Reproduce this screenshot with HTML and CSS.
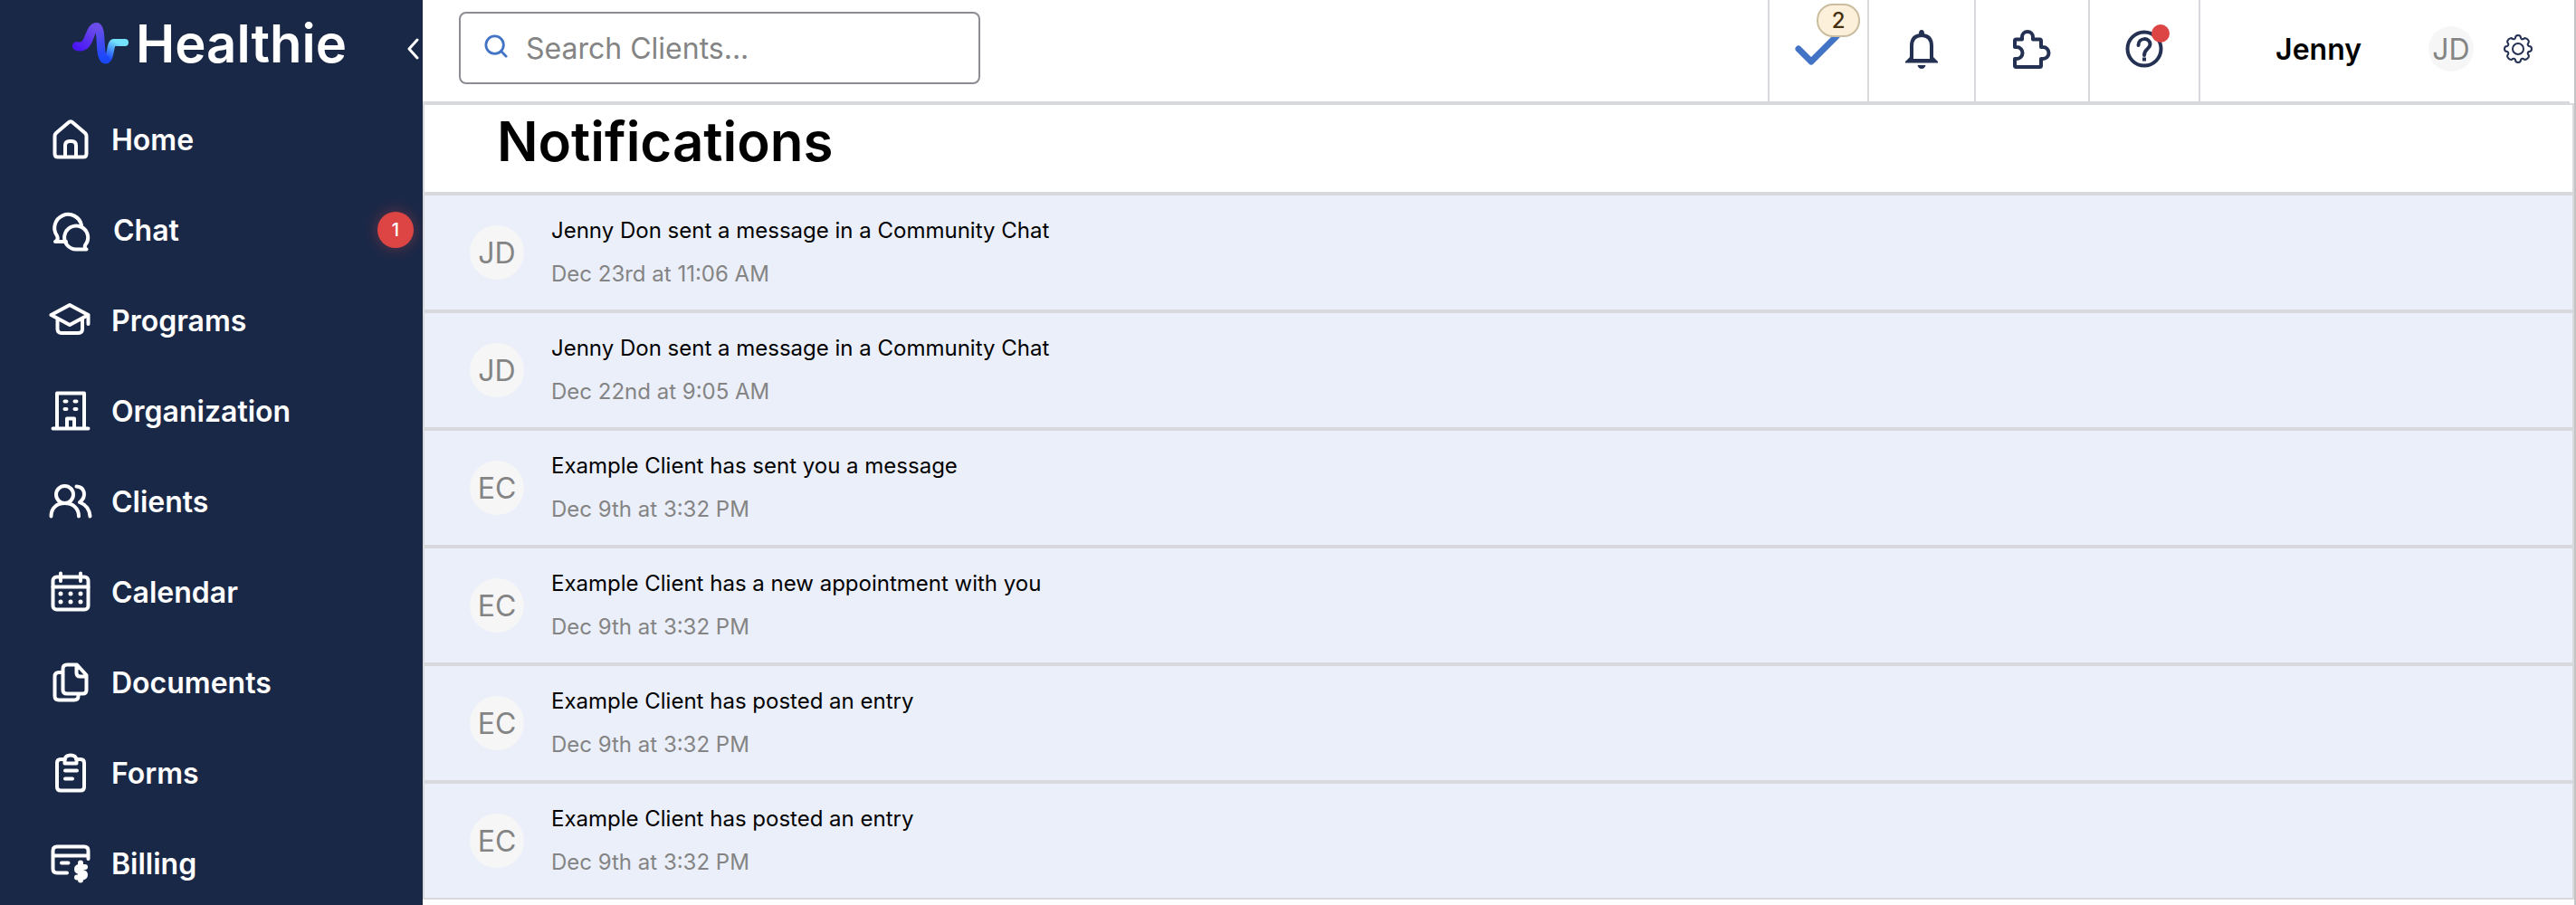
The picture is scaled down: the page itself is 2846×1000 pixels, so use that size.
FILE: index.html
```html
<!DOCTYPE html>
<html lang="en-us">
<head>
  <meta charset="utf-8">
  <title>Healthie - Notifications</title>
  <link rel="stylesheet" href="styles.css">
</head>
<body>

  <aside class="sidebar">
    <div class="brand">
      <a href="#" class="logo">
        <svg class="logo-mark" viewBox="0 0 62 48" fill="none" stroke-linecap="round" stroke-linejoin="round">
          <defs>
            <linearGradient id="wave-left" gradientUnits="userSpaceOnUse" x1="5" y1="30" x2="24" y2="6">
              <stop offset="0" stop-color="#4a14f5"/>
              <stop offset="1" stop-color="#6a4de9"/>
            </linearGradient>
            <linearGradient id="wave-mid" gradientUnits="userSpaceOnUse" x1="30" y1="6" x2="34" y2="40">
              <stop offset="0" stop-color="#6a4de9"/>
              <stop offset="1" stop-color="#1b47fb"/>
            </linearGradient>
            <linearGradient id="wave-right" gradientUnits="userSpaceOnUse" x1="38" y1="40" x2="48" y2="22">
              <stop offset="0" stop-color="#1b47fb"/>
              <stop offset="1" stop-color="#74e2fb"/>
            </linearGradient>
          </defs>
          <path d="M37 42C43 42 41 23 46 23H58" stroke="url(#wave-right)" stroke-width="8"/>
          <path d="M27 6C34 6 28 42 37 42" stroke="url(#wave-mid)" stroke-width="9"/>
          <path d="M5 27C21 31 17 6 27 6" stroke="url(#wave-left)" stroke-width="10"/>
        </svg>
        <span class="logo-name">Healthie</span>
      </a>
      <button class="collapse" aria-label="Collapse menu">
        <svg viewBox="0 0 14 24"><path d="M12 2L3 12l9 10"/></svg>
      </button>
    </div>

    <nav class="menu">
      <a href="#">
        <svg class="menu-icon" viewBox="0 0 48 48"><path d="M6.500 20.500q0-2 1.500-3.500L21.500 5.500q2.500-2.500 5 0L40 17q1.500 1.500 1.500 3.500V40q0 3.500-3.500 3.500H10q-3.500 0-3.500-3.500zM18 43.500V31q0-5 5-5h2q5 0 5 5v12.500"/></svg>
        <span>Home</span>
      </a>
      <a href="#" class="chat">
        <svg class="menu-icon" viewBox="0 0 48 48"><path d="M19 37H7q4-2 2-6.500A15 15 0 1 1 36 19"/><path d="M41.500 45.500H30.500A13 13 0 1 1 40 41q-1 3 1.500 4.500z"/></svg>
        <span>Chat</span>
        <span class="menu-count">1</span>
      </a>
      <a href="#">
        <svg class="menu-icon" viewBox="0 0 48 48"><path d="M2.500 18L23 7l20.500 11L23 29zM43.500 18v10M9.500 22v11.500q0 4.500 4.500 4.500h18.500q4.500 0 4.500-4.500V22"/></svg>
        <span>Programs</span>
      </a>
      <a href="#">
        <svg class="menu-icon" viewBox="0 0 48 48"><path d="M4.500 43.500h39M9 43V4.500h30V43M20 43V32.500h8V43M17.500 13.500h2M28.500 13.500h2M17.500 22h2M28.500 22h2"/></svg>
        <span>Organization</span>
      </a>
      <a href="#">
        <svg class="menu-icon" viewBox="0 0 48 48"><circle cx="17.500" cy="16.500" r="9.500"/><path d="M2.500 40.500C2.500 31 9 26 17.500 26S33 31 33 40.500M30.500 7.500C40 8 42 19 34 25c8 3 11 9 11.500 15.500"/></svg>
        <span>Clients</span>
      </a>
      <a href="#">
        <svg class="menu-icon" viewBox="0 0 48 48"><rect x="4.500" y="7.500" width="39" height="36" rx="4"/><path d="M4.500 18.500h39M13 3.500v8.500M35 3.500v8.500"/><path class="dots" d="M13 26h.01M24 26h.01M35 26h.01M13 35h.01M24 35h.01M35 35h.01"/></svg>
        <span>Calendar</span>
      </a>
      <a href="#">
        <svg class="menu-icon" viewBox="0 0 48 48"><path d="M15.500 9q0-4.500 4.500-4.500h11L41.500 16v16.500q0 4-4 4H20q-4.500 0-4.500-4zM30.500 4.500v9q0 4 4 4h7M15.500 13H11q-4.500 0-4.500 4.500V39q0 4.500 4.500 4.500h17q4.500 0 4.500-4.500v-2"/></svg>
        <span>Documents</span>
      </a>
      <a href="#">
        <svg class="menu-icon" viewBox="0 0 48 48"><path d="M18 9h-5q-4 0-4 4v26.500q0 4 4 4h22q4 0 4-4V13q0-4-4-4h-5M17.500 13.500V9q1-4.500 6.500-4.500T30.500 9v4.500zM18 21.500h13M18 30.500h8"/></svg>
        <span>Forms</span>
      </a>
      <a href="#">
        <svg class="menu-icon" viewBox="0 0 48 48"><path d="M20 34.500H9q-4.500 0-4.500-4.500V10q0-4.500 4.500-4.500h30q4.500 0 4.500 4.500v9M4.500 15.500h39M14 23.500h7.500"/><path class="dollar" d="M35 23.500v19M40 28h-6q-3 0-3 2.500t4.500 3 4.500 3-3 3h-6"/></svg>
        <span>Billing</span>
      </a>
    </nav>
  </aside>

  <div class="page">
    <header class="topbar">
      <div class="search">
        <svg viewBox="0 0 28 28"><circle cx="12.500" cy="12.500" r="10.500"/><path d="M20 20l6 6"/></svg>
        <input type="text" placeholder="Search Clients..." aria-label="Search Clients">
      </div>

      <div class="actions">
        <button class="action tasks" aria-label="Tasks">
          <svg viewBox="0 0 52 38"><path d="M4 19l14 14L47 4"/></svg>
          <span class="task-count">2</span>
        </button>
        <button class="action bell" aria-label="Notifications">
          <svg viewBox="0 0 36 44"><path class="line" d="M7 35V19C7 11 11 7 18 7s11 4 11 12v16"/><path d="M15 5q0-4 3-4t3 4v3h-6zM0 36l6-6v3h24v-3l6 6v1.500H0zM13.500 40h9q-1 4-4.500 4t-4.500-4"/></svg>
        </button>
        <button class="action apps" aria-label="Integrations">
          <svg viewBox="0 0 44 44"><path class="line" d="M3 13q0-1.500 1.500-1.500H11V9a6 6 0 0 1 12 0v2.500h7.500q1.500 0 1.500 1.500v7h2a6 6 0 0 1 0 13h-2v7.500q0 1.500-1.500 1.500h-26Q3 42 3 40.500V33h2a6.500 6.500 0 0 0 0-13H3z"/></svg>
        </button>
        <button class="action help" aria-label="Help">
          <svg viewBox="0 0 42 42"><circle class="line" cx="21" cy="21" r="18.500"/><path class="line" d="M14.500 17C14.500 8 27.500 8 27.500 16 27.500 21 21 21 21 28"/><path d="M19 30.500h4v4h-4z"/></svg>
          <span class="help-dot"></span>
        </button>
        <div class="account">
          <span class="account-name">Jenny</span>
          <span class="avatar small">JD</span>
          <button class="settings" aria-label="Settings">
            <svg viewBox="0 0 32 32"><circle cx="16" cy="16" r="6"/><path d="M13 4q0-3 3-3t3 3q1 2 3 1 2-2 4.500.500T27 10q-1 2 1 3 3 0 3 3t-3 3q-2 1-1 3 2 2-.500 4.500T22 27q-2-1-3 1 0 3-3 3t-3-3q-1-2-3-1-2 2-4.500-.500T5 22q1-2-1-3-3 0-3-3t3-3q2-1 1-3-2-2 .500-4.500T10 5q2 1 3-1z"/></svg>
          </button>
        </div>
      </div>
    </header>

    <main class="notifications">
      <h1>Notifications</h1>
      <ul>
        <li>
          <span class="avatar">JD</span>
          <div>
            <p>Jenny Don sent a message in a Community Chat</p>
            <p class="date">Dec 23rd at 11:06 AM</p>
          </div>
        </li>
        <li>
          <span class="avatar">JD</span>
          <div>
            <p>Jenny Don sent a message in a Community Chat</p>
            <p class="date">Dec 22nd at 9:05 AM</p>
          </div>
        </li>
        <li>
          <span class="avatar">EC</span>
          <div>
            <p>Example Client has sent you a message</p>
            <p class="date">Dec 9th at 3:32 PM</p>
          </div>
        </li>
        <li>
          <span class="avatar">EC</span>
          <div>
            <p>Example Client has a new appointment with you</p>
            <p class="date">Dec 9th at 3:32 PM</p>
          </div>
        </li>
        <li>
          <span class="avatar">EC</span>
          <div>
            <p>Example Client has posted an entry</p>
            <p class="date">Dec 9th at 3:32 PM</p>
          </div>
        </li>
        <li>
          <span class="avatar">EC</span>
          <div>
            <p>Example Client has posted an entry</p>
            <p class="date">Dec 9th at 3:32 PM</p>
          </div>
        </li>
      </ul>
    </main>
  </div>

</body>
</html>
```
FILE: styles.css
```css
* {
  box-sizing: border-box;
}
body {
  margin: 0;
  display: flex;
  min-height: 100vh;
  background-color: white;
  font-family: Inter, "Liberation Sans", sans-serif;
  font-size: 24px;
  color: black;
}
h1, p, ul {
  margin: 0;
  padding: 0;
}
a {
  color: inherit;
  text-decoration: none;
}
button {
  padding: 0;
  border: 0;
  background: none;
  font: inherit;
  cursor: pointer;
}
svg {
  display: block;
  fill: none;
  stroke-linecap: round;
  stroke-linejoin: round;
}

/* sidebar */
.sidebar {
  flex: none;
  width: 467px;
  background-color: #1a2847;
  color: white;
}
.brand {
  display: flex;
  justify-content: space-between;
  align-items: center;
  height: 104px;
  padding: 0 4px 0 80px;
}
.logo {
  display: flex;
  align-items: center;
  gap: 8px;
  padding-bottom: 8px;
}
.logo-mark {
  width: 62px;
  height: 48px;
}
.logo-name {
  font-size: 58px;
  line-height: 64px;
  font-weight: 600;
}
.collapse {
  padding-top: 4px;
}
.collapse svg {
  width: 14px;
  height: 24px;
  stroke: white;
  stroke-width: 3;
}
.menu a {
  display: flex;
  align-items: center;
  gap: 21px;
  height: 100px;
  padding: 0 10px 0 54px;
  font-size: 32px;
  font-weight: 600;
}
.menu .chat {
  gap: 23px;
}
.menu-icon {
  width: 48px;
  height: 48px;
  stroke: white;
  stroke-width: 4;
}
.menu-icon .dots {
  stroke-width: 5;
}
.menu-icon .dollar {
  stroke-width: 6;
}
.menu-count {
  display: flex;
  justify-content: center;
  align-items: center;
  width: 40px;
  height: 40px;
  margin-left: auto;
  border-radius: 50%;
  background-color: #dc4543;
  box-shadow: 0 0 16px rgba(220, 69, 67, .4);
  font-size: 20px;
  font-weight: 500;
}

/* top bar */
.page {
  flex: 1;
  border-right: 2px solid #c4c4c7;
}
.topbar {
  display: flex;
  justify-content: space-between;
  height: 114px;
  margin-right: 5px;
  border-bottom: 2px solid #d8d9dd;
}
.search {
  display: flex;
  align-items: center;
  gap: 20px;
  width: 576px;
  height: 80px;
  margin: 13px 0 0 40px;
  padding: 0 26px;
  border: 2px solid #8b8d93;
  border-radius: 8px;
}
.search svg {
  flex: none;
  width: 26px;
  height: 26px;
  margin-bottom: 4px;
  stroke: #4273c5;
  stroke-width: 3;
}
.search input {
  flex: 1;
  min-width: 0;
  padding: 0;
  border: 0;
  outline: none;
  font: inherit;
  font-size: 32px;
}
.search input::placeholder {
  color: #848484;
}
.actions {
  display: flex;
}
.action, .account {
  display: flex;
  justify-content: center;
  align-items: center;
  position: relative;
  padding-bottom: 4px;
  border-left: 2px solid #d8d9dd;
}
.action svg {
  fill: #243152;
}
.action .line {
  fill: none;
  stroke: #243152;
  stroke-width: 4;
}
.tasks {
  width: 110px;
}
.tasks svg {
  width: 52px;
  height: 38px;
  fill: none;
  stroke: #4273c5;
  stroke-width: 7;
}
.task-count {
  position: absolute;
  top: 4px;
  right: 8px;
  width: 48px;
  height: 37px;
  border: 2px solid #cbbd9f;
  border-radius: 18px;
  background-color: #fcf0da;
  color: #46310f;
  font-size: 24px;
  line-height: 33px;
  font-weight: 500;
}
.bell {
  width: 118px;
}
.bell svg {
  width: 36px;
  height: 44px;
}
.apps {
  width: 126px;
}
.apps svg {
  width: 44px;
  height: 44px;
}
.help {
  width: 122px;
}
.help svg {
  width: 42px;
  height: 42px;
}
.help-dot {
  position: absolute;
  top: 27px;
  right: 32px;
  width: 20px;
  height: 20px;
  border-radius: 50%;
  background-color: #dc4543;
}
.account {
  padding: 0 41px 4px 83px;
}
.account-name {
  margin-right: 74px;
  font-size: 32px;
  font-weight: 600;
}
.avatar {
  display: flex;
  flex: none;
  justify-content: center;
  align-items: center;
  width: 60px;
  height: 60px;
  border-radius: 50%;
  background-color: #f6f6f6;
  color: #848484;
  font-size: 32px;
}
.avatar.small {
  width: 50px;
  height: 50px;
}
.settings {
  margin-left: 33px;
}
.settings svg {
  width: 32px;
  height: 32px;
  stroke: #243152;
  stroke-width: 2;
}

/* notification list */
.notifications h1 {
  height: 100px;
  padding: 0 80px;
  border: 2px solid #d8d9dd;
  font-size: 60px;
  line-height: 80px;
  font-weight: 600;
}
.notifications ul {
  list-style: none;
}
.notifications li {
  display: flex;
  align-items: center;
  gap: 30px;
  height: 130px;
  padding: 0 50px;
  border: 2px solid #d8d9dd;
  background-color: #ebeffa;
}
.notifications p {
  line-height: 48px;
}
.notifications .date {
  color: #848484;
}
```
